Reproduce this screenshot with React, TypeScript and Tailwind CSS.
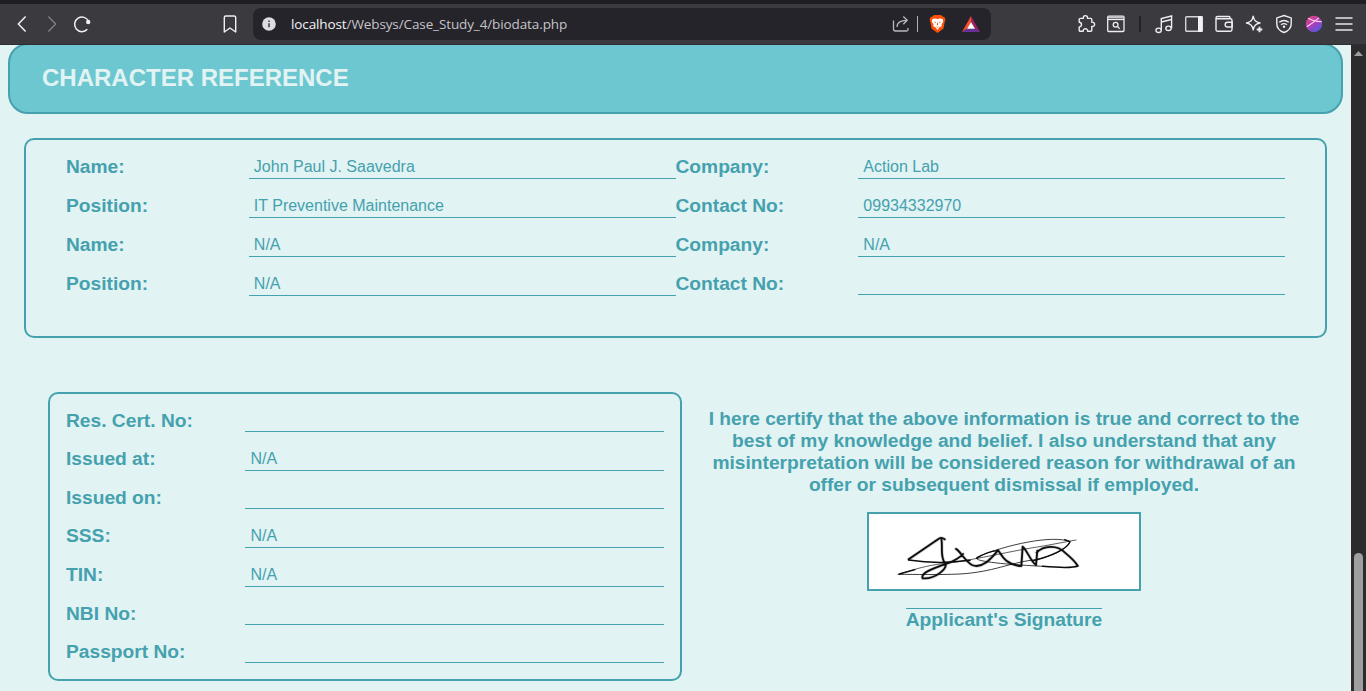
import React from "react";

function Toolbar() {
  return (
    <header className="h-[45px] w-full bg-[#3b3a3f] border-t-4 border-[#1f1e23] shrink-0">
      <div className="h-[41px] flex items-center border-b border-[#2f2e33] pb-px pl-[13px] pr-[12px] [&>*]:shrink-0">
        <svg width="20" height="20" viewBox="0 0 20 20" fill="none" stroke="#f0eff4" strokeWidth="1.5">
          <path d="M12.6 2.5 5.4 10l7.2 7.5" />
        </svg>
        <svg className="ml-[9px]" width="20" height="20" viewBox="0 0 20 20" fill="none" stroke="#807f85" strokeWidth="1.4">
          <path d="M6.4 2.5 13.6 10l-7.2 7.5" />
        </svg>
        <svg className="ml-[10px]" width="20" height="20" viewBox="0 0 20 20" fill="none" stroke="#f0eff4" strokeWidth="1.5">
          <path d="M15.3 15.3A7.3 7.3 0 1 1 16.6 7.4" />
          <circle cx="16.2" cy="8" r="2.2" fill="#f0eff4" stroke="none" />
        </svg>
        <svg className="ml-[128px]" width="20" height="20" viewBox="0 0 20 20" fill="none" stroke="#f0eff4" strokeWidth="1.4" strokeLinejoin="round">
          <path d="M5.8 2h8.4a1.5 1.5 0 0 1 1.5 1.5V18L10 14 4.3 18V3.500A1.500 1.500 0 0 1 5.800 2Z" />
        </svg>
        <div className="ml-[13px] h-8 w-[738px] rounded-lg bg-[#25242a] flex items-center pl-[9px] [&>*]:shrink-0">
          <svg width="14" height="14" viewBox="0 0 14 14">
            <circle cx="7" cy="7" r="6.8" fill="#dddce2" />
            <path d="M7 6.200V10.300M7 3.500V5" stroke="#3b3a40" strokeWidth="1.500" />
          </svg>
          <div className="ml-[15px] w-[590px] whitespace-nowrap text-[13.5px] leading-5 font-['Open_Sans',sans-serif] tracking-[-0.11px] text-[#c4c3c9]">
            <span className="text-[#f3f2f7]">localhost</span>/Websys/Case_Study_4/biodata.php
          </div>
          <svg className="ml-[11px]" width="18" height="18" viewBox="0 0 18 18" fill="none" stroke="#b9b8be" strokeWidth="1.300">
            <path d="M1.500 5.500V14a2 2 0 0 0 2 2h11a1.500 1.500 0 0 0 1.500-1.500V13" />
            <path d="M5 12C5 7.500 8 5.300 15 5.300M11.300 1.500 15.200 5.300 11.300 9.200" />
          </svg>
          <div className="ml-[7px] h-4 w-px bg-[#b2b1b7]" />
          <svg className="ml-[11px]" width="17" height="18" viewBox="0 0 17 18">
            <path d="M5 0h7l1.500 1.500L15.500 2l1 3-.7 1.500-1.300 7L8.500 18 2.500 13.500l-1.300-7L.5 5l1-3 2-.5Z" fill="#fb5008" />
            <path d="M3.400 4 6 3.400 8.500 4 11 3.400 13.600 4 14.300 6.500 12.500 9.500 12.700 11.300 10.500 12.300 8.500 15 6.500 12.300 4.300 11.300 4.500 9.500 2.700 6.500Z" fill="#fff" />
            <path d="M4.800 6.500 7 7.100 6.600 8ZM12.200 6.500 10 7.100l.4.900ZM8.200 7.500h.6l.3 2.300-.6.700-.6-.7ZM6.500 11.300l2 .6 2-.6-2 1.500Z" fill="#fb5008" />
          </svg>
          <svg className="ml-[16px]" width="18" height="16" viewBox="0 0 18 16">
            <path d="M9 0 0 16l5-3 4-7Z" fill="#ff4a24" />
            <path d="M9 0l9 16-5-3L9 6Z" fill="#9e1f63" />
            <path d="M0 16h18l-5-3.500H5Z" fill="#663298" />
            <path d="M9 6 5 12.800h8Z" fill="#fff" />
          </svg>
        </div>

        <svg className="ml-[85px]" width="20" height="20" viewBox="0 0 20 20" fill="none" stroke="#eeedf2" strokeWidth="1.400" strokeLinejoin="round">
          <path d="M4.200 4.400H7.400C7 2.300 8 1.600 9.400 1.600s2.400.7 2 2.800h3.400a1 1 0 0 1 1 1V8.200c1.900-.2 2.800.8 2.800 2.100s-.9 2.300-2.800 2.100v3.800a1 1 0 0 1-1 1H11.600c.1-1.600-.8-2.500-2.200-2.500S7.100 15.600 7.200 17.200H4.200a1 1 0 0 1-1-1V12.900c1.500 0 2.300-.9 2.300-2.300S4.700 8.300 3.200 8.300V5.400a1 1 0 0 1 1-1Z" />
        </svg>
        <svg className="ml-[10px]" width="20" height="20" viewBox="0 0 20 20" fill="none" stroke="#eeedf2" strokeWidth="1.300">
          <rect x="1.700" y="2.200" width="16.300" height="15.300" rx="1" />
          <path d="M2 3.400h16" stroke="#c6c5ca" strokeWidth="1.800" />
          <path d="M2 5.500h16" />
          <circle cx="9.600" cy="10.700" r="2.400" />
          <path d="m11.300 12.400 2.400 2.300" />
        </svg>
        <div className="ml-[13px] h-4 w-[2px] bg-[#222126]" />
        <svg className="ml-[13px]" width="20" height="20" viewBox="0 0 20 20" fill="none" stroke="#eeedf2" strokeWidth="1.400">
          <ellipse cx="4.600" cy="16.300" rx="2.700" ry="2.200" />
          <ellipse cx="14.500" cy="14.300" rx="2.700" ry="2.200" />
          <path d="M7.300 16V4.500L17.600 2v12.300M7.300 8 17.600 5.500" />
        </svg>
        <svg className="ml-[10px]" width="20" height="20" viewBox="0 0 20 20">
          <rect x="1.700" y="2.700" width="16.600" height="14.600" rx="1" fill="none" stroke="#d5d4d9" strokeWidth="1.400" />
          <path d="M14 2h4.500v16H14Z" fill="#f1f0f5" />
        </svg>
        <svg className="ml-[10px]" width="20" height="20" viewBox="0 0 20 20" fill="none" stroke="#eeedf2" strokeWidth="1.400">
          <path d="M18 7V6.300a1.600 1.600 0 0 0-1.600-1.600H2M16 4.500V3.700A1.200 1.200 0 0 0 14.800 2.500H3.500A1.500 1.500 0 0 0 2 4v11.500A1.700 1.700 0 0 0 3.700 17.300H16.300A1.700 1.700 0 0 0 18 15.600V7" />
          <path d="M18.200 8.300H13.500a2.300 2.300 0 0 0 0 4.700h4.700Z" />
        </svg>
        <svg className="ml-[10px]" width="20" height="20" viewBox="0 0 20 20" fill="none" stroke="#eeedf2" strokeWidth="1.400" strokeLinejoin="round">
          <path d="M9.200 2.200c.8 4.300 2.300 5.800 6.800 6.800-4.500 1-6 2.500-6.800 6.800-.8-4.300-2.300-5.800-6.800-6.800 4.500-1 6-2.500 6.800-6.800Z" />
          <path d="M15.500 12.700v5.600M12.700 15.500h5.600" strokeWidth="1.900" />
        </svg>
        <svg className="ml-[10px]" width="20" height="20" viewBox="0 0 20 20" fill="none" stroke="#eeedf2" strokeWidth="1.400">
          <path d="m10 1.500 7.200 2.400v6c0 4-2.700 6.800-7.200 8.600C5.500 16.700 2.800 13.900 2.800 9.900v-6Z" />
          <path d="M5.200 8.300c3-2.300 6.600-2.300 9.600 0M7 10.700c2-1.400 4-1.400 6 0" />
          <circle cx="10" cy="12.800" r="1.200" fill="#eeedf2" stroke="none" />
        </svg>
        <svg className="ml-[10px]" width="20" height="20" viewBox="0 0 20 20">
          <defs>
            <linearGradient id="orb" x1="0" y1="0" x2="0.700" y2="1">
              <stop offset="0" stopColor="#f24872" />
              <stop offset="0.500" stopColor="#b73bb4" />
              <stop offset="1" stopColor="#4f5be0" />
            </linearGradient>
          </defs>
          <circle cx="10" cy="10" r="8.200" fill="url(#orb)" />
          <path d="M4.300 4.300C8 6.500 12 7.600 17.800 7.800M2.800 12.800C7 10 10.500 7.500 14.800 3.800" stroke="#ffd7f3" strokeWidth="1.100" fill="none" />
        </svg>
        <svg className="ml-[10px]" width="20" height="20" viewBox="0 0 20 20" stroke="#e6e5ea" strokeWidth="1.600">
          <path d="M1.500 4h17M1.500 10h17M1.500 16h17" />
        </svg>
      </div>
    </header>
  );
}

type FieldProps = { label: string; value?: string; size: string };

function Field({ label, value, size }: FieldProps) {
  return (
    <div className={`flex items-end ${size}`}>
      <div className={`w-[30%] shrink-0 text-[19.2px] leading-[22px] font-bold ${value ? "pb-px" : "pb-0"}`}>{label}</div>
      <div className="flex-1 border-b border-[#45a1ae] h-[25px] pl-[5px] pt-px text-base leading-[24px]">{value}</div>
    </div>
  );
}

const row39 = "h-[39px]";
const row38 = "h-[38px]";

const references: FieldProps[] = [
  { label: "Name:", value: "John Paul J. Saavedra", size: row39 },
  { label: "Company:", value: "Action Lab", size: row39 },
  { label: "Position:", value: "IT Preventive Maintenance", size: row39 },
  { label: "Contact No:", value: "09934332970", size: row39 },
  { label: "Name:", value: "N/A", size: row39 },
  { label: "Company:", value: "N/A", size: row39 },
  { label: "Position:", value: "N/A", size: row39 },
  { label: "Contact No:", size: row38 },
];

const certificates: FieldProps[] = [
  { label: "Res. Cert. No:", size: row38 },
  { label: "Issued at:", value: "N/A", size: row39 },
  { label: "Issued on:", size: row38 },
  { label: "SSS:", value: "N/A", size: row39 },
  { label: "TIN:", value: "N/A", size: row39 },
  { label: "NBI No:", size: row38 },
  { label: "Passport No:", size: row38 },
];

const penStrokes =
  "M254 118C246 112 240 112 234 118L146 178M244 116C249 140 240 165 253 187M256 188C264 206 226 238 188 235C180 218 222 205 262 190C290 180 302 170 309 162M288 147C298 150 314 182 336 195C365 207 390 180 414 151C424 160 430 192 480 198M484 198L488 140C500 148 512 185 528 195L532 152M530 158C550 136 592 134 615 158C632 172 644 183 653 197";

function Signature() {
  return (
    <svg className="block w-[270px] h-[75px]" viewBox="27 42 810 225" fill="none" stroke="#0c0c0c" strokeLinecap="round" strokeLinejoin="round">
      <path d={penStrokes} strokeWidth="10" strokeOpacity="0.2" />
      <path d={penStrokes} strokeWidth="5.500" />
      <path d="M146 180C210 190 280 188 330 181M653 198C640 204 610 204 548 199" strokeWidth="4.500" />
      <path d="M118 222C180 202 220 193 260 190C370 175 440 155 550 138L648 120" strokeWidth="2" />
      <path d="M114 223C170 223 230 225 300 222C400 216 450 188 520 180C580 169 622 147 630 125C580 104 440 133 350 172C340 181 390 191 550 199" strokeWidth="2.400" />
      <path d="M520 182C570 169 622 147 630 125L614 119M350 175C370 161 395 153 414 151M118 222L165 209" strokeWidth="4" />
    </svg>
  );
}

export default function App() {
  return (
    <div className="w-full h-[691px] flex flex-col overflow-hidden bg-[#e1f3f3] font-['Liberation_Sans',Arial,sans-serif] text-[#45a1ae]">
      <Toolbar />
      <div className="flex flex-1 min-h-0">
        <main className="flex-1 min-w-0 overflow-hidden">
          <div className="-mt-[2px] mx-2 h-[71px] rounded-[20px] border-2 border-[#45a1ae] bg-[#6dc7d0] pl-8 flex items-center">
            <h2 className="text-2xl leading-7 font-bold text-[#e1f3f3] pb-px">CHARACTER REFERENCE</h2>
          </div>

          <section className="mt-6 mx-6 h-[200px] rounded-[10px] border-2 border-[#45a1ae] px-10 grid grid-cols-2 content-start">
            {references.map((f, i) => (
              <Field key={i} {...f} />
            ))}
          </section>

          <div className="mt-[54px] mx-12 flex">
            <section className="w-[634px] shrink-0 h-[289px] rounded-[10px] border-2 border-[#45a1ae] px-4">
              {certificates.map((f, i) => (
                <Field key={i} {...f} />
              ))}
            </section>
            <section className="ml-[14px] w-[616px] shrink-0 flex flex-col items-center pt-[16px] font-bold text-[19.2px] leading-[22px] text-center">
              <p>
                I here certify that the above information is true and correct to the
                <br />
                best of my knowledge and belief. I also understand that any
                <br />
                misinterpretation will be considered reason for withdrawal of an
                <br />
                offer or subsequent dismissal if employed.
              </p>
              <div className="mt-[16px] w-[274px] h-[79px] border-2 border-[#45a1ae] bg-white">
                <Signature />
              </div>
              <p className="mt-[17px] border-t border-[#45a1ae]">Applicant's Signature</p>
            </section>
          </div>
        </main>
        <aside className="w-[15px] shrink-0 bg-[#2c2c2c] flex flex-col items-center">
          <svg className="mt-[6px]" width="9" height="5" viewBox="0 0 9 5">
            <path d="M4.500 0 9 5H0Z" fill="#9f9f9f" />
          </svg>
          <div className="mt-[497px] flex-1 w-[9px] rounded-t-[5px] bg-[#9f9f9f]" />
        </aside>
      </div>
    </div>
  );
}
